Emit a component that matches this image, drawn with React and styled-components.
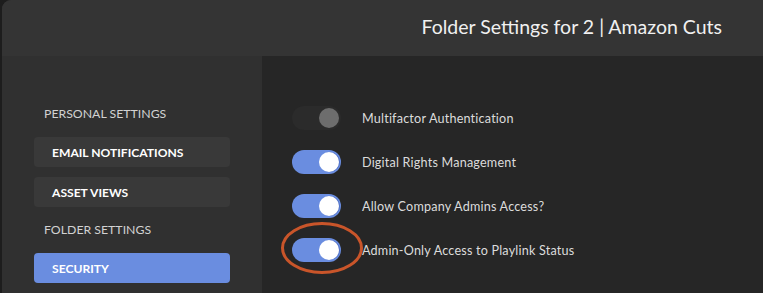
import React from 'react';
import styled, { createGlobalStyle } from 'styled-components';

const GlobalStyle = createGlobalStyle`
  html, body {
    margin: 0;
    padding: 0;
    background: #1d1d1d;
    overflow: hidden;
  }
  * {
    box-sizing: border-box;
  }
`;

const Window = styled.div`
  display: flex;
  flex-direction: column;
  width: 763px;
  height: 293px;
  margin-left: 2px;
  border-top-left-radius: 9px;
  overflow: hidden;
  background-color: #303030;
  font-family: Lato, "Open Sans", sans-serif;
`;

const Header = styled.div`
  display: flex;
  flex-shrink: 0;
  align-items: center;
  justify-content: flex-end;
  height: 56px;
  padding-right: 43px;
  background-color: #343434;
`;

const Title = styled.h1`
  margin: 0 0 3px;
  font-size: 19.5px;
  font-weight: 400;
  color: #f0f0f0;
`;

const Body = styled.div`
  display: flex;
  flex: 1;
`;

const Sidebar = styled.nav`
  display: flex;
  flex-direction: column;
  width: 260px;
  padding: 45px 0 0 32px;
  background-color: #303030;
`;

const SectionTitle = styled.div`
  height: 24px;
  display: flex;
  align-items: center;
  padding-left: 10px;
  margin-bottom: 12px;
  font-size: 12.3px;
  font-weight: 400;
  color: #d2d2d2;
`;

const NavItem = styled.div`
  display: flex;
  align-items: center;
  width: 196px;
  height: 30px;
  padding-left: 18px;
  margin-bottom: 10px;
  border-radius: 4px;
  font-size: 12.1px;
  font-weight: 700;
  color: #ffffff;
  background-color: ${(p) => (p.$active ? '#6a8de0' : '#393939')};
`;

const Content = styled.main`
  position: relative;
  flex: 1;
  padding: 50px 0 0 30px;
  background-color: #262626;
`;

const Row = styled.div`
  display: flex;
  align-items: center;
  height: 24px;
  margin-bottom: 20px;
`;

const Track = styled.div`
  display: flex;
  align-items: center;
  justify-content: flex-end;
  width: 49px;
  height: 24px;
  padding-right: 2px;
  border-radius: 12px;
  background-color: ${(p) => (p.$on ? '#6a8de0' : '#2b2b2b')};
`;

const Knob = styled.div`
  width: 20px;
  height: 20px;
  border-radius: 50%;
  background-color: ${(p) => (p.$on ? '#ffffff' : '#6d6d6d')};
  box-shadow: ${(p) => (p.$on ? '1px 0 0 #4f6fc4' : 'none')};
`;

const Label = styled.span`
  margin-left: 21px;
  font-size: 12.6px;
  color: #dcdcdc;
  letter-spacing: 0.2px;
`;

const Marker = styled.svg`
  position: absolute;
  left: 18px;
  top: 165px;
  pointer-events: none;
`;

const settings = [
  { label: 'Multifactor Authentication', on: false },
  { label: 'Digital Rights Management', on: true },
  { label: 'Allow Company Admins Access?', on: true },
  { label: 'Admin-Only Access to Playlink Status', on: true },
];

const Toggle = ({ on }) => (
  <Track $on={on}>
    <Knob $on={on} />
  </Track>
);

export default function App() {
  return (
    <>
      <GlobalStyle />
      <Window>
        <Header>
          <Title>Folder Settings for 2 | Amazon Cuts</Title>
        </Header>
        <Body>
          <Sidebar>
            <SectionTitle>PERSONAL SETTINGS</SectionTitle>
            <NavItem>EMAIL NOTIFICATIONS</NavItem>
            <NavItem>ASSET VIEWS</NavItem>
            <SectionTitle>FOLDER SETTINGS</SectionTitle>
            <NavItem $active>SECURITY</NavItem>
          </Sidebar>
          <Content>
            {settings.map((s) => (
              <Row key={s.label}>
                <Toggle on={s.on} />
                <Label>{s.label}</Label>
              </Row>
            ))}
            <Marker width="86" height="56" viewBox="0 0 86 56">
              <ellipse cx="42" cy="27" rx="39.5" ry="24.5" fill="none" stroke="#c9552a" strokeWidth="3" />
            </Marker>
          </Content>
        </Body>
      </Window>
    </>
  );
}
